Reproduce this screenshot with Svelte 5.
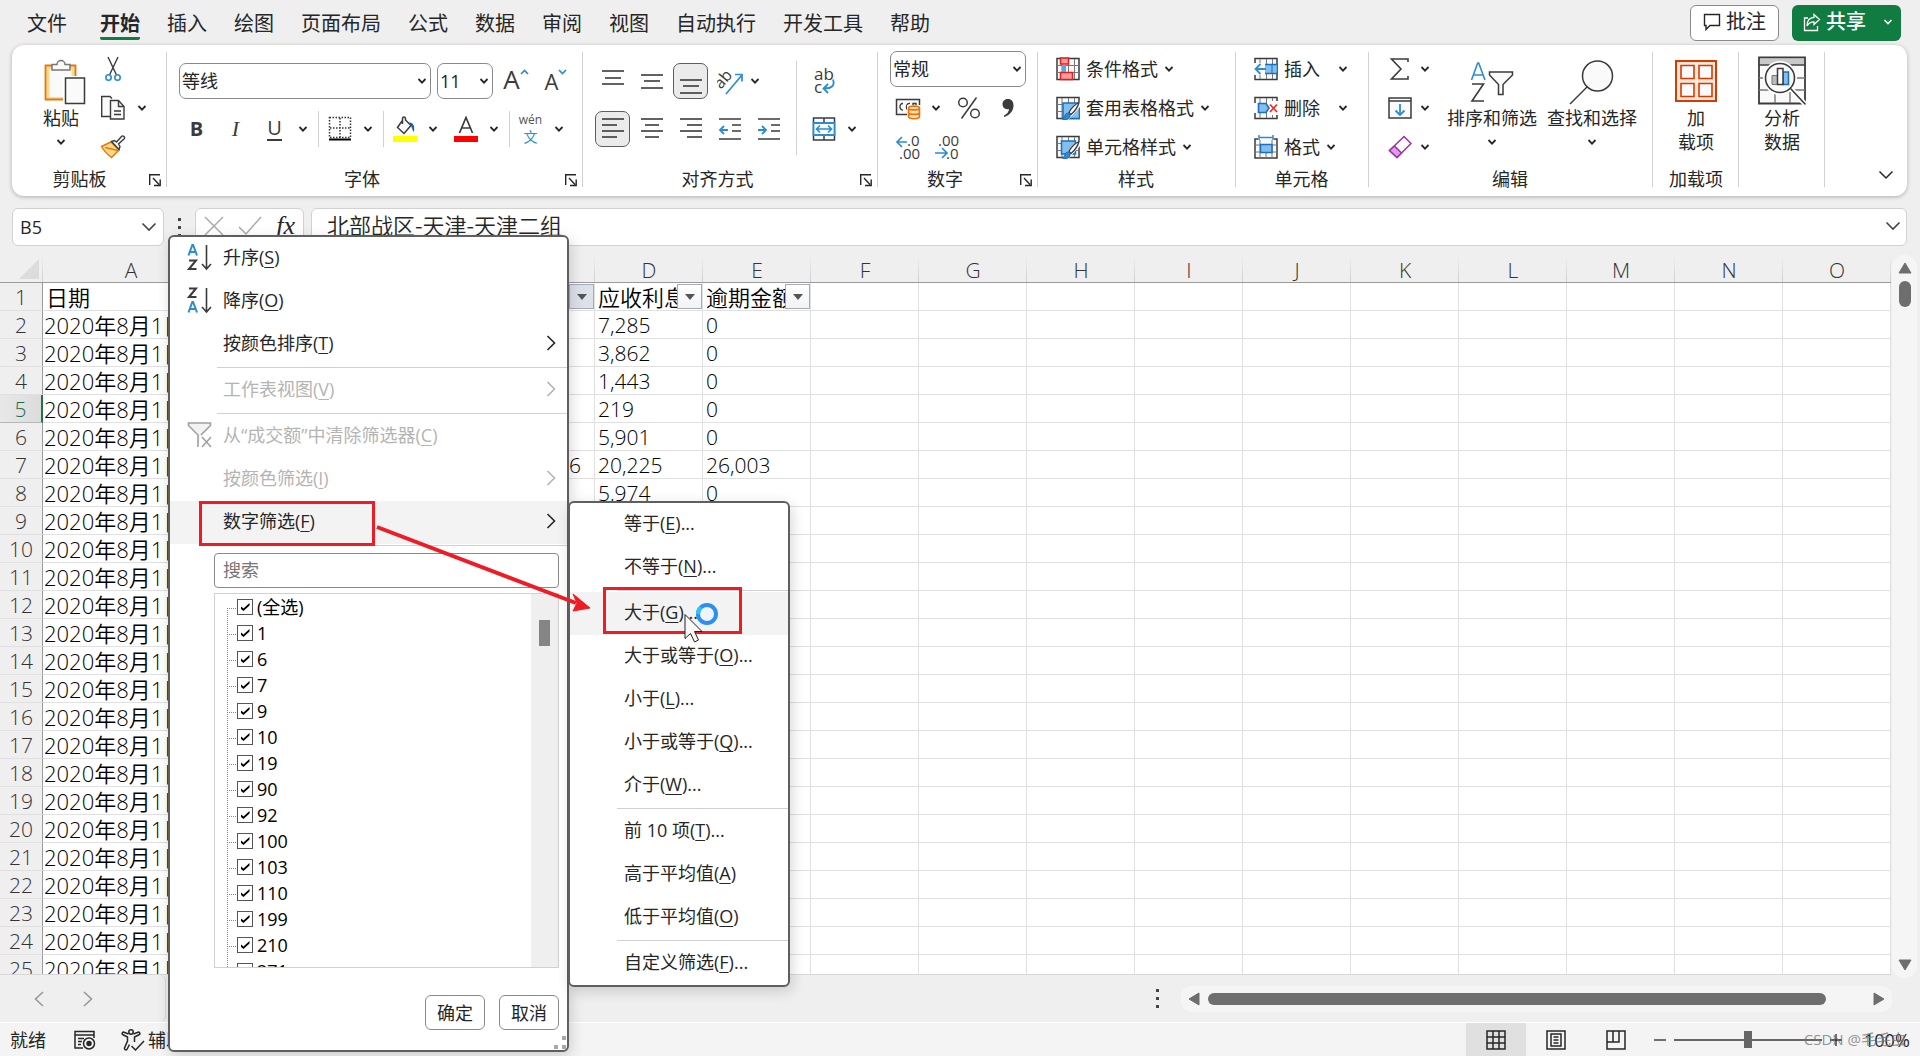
<script>
  const tabs = ['文件', '开始', '插入', '绘图', '页面布局', '公式', '数据', '审阅', '视图', '自动执行', '开发工具', '帮助'];
  const columns = ['A', 'B', 'C', 'D', 'E', 'F', 'G', 'H', 'I', 'J', 'K', 'L', 'M', 'N', 'O'];
  const emptyColumns = columns.slice(5);
  const figures = {
    2: ['', '7,285', '0'],
    3: ['', '3,862', '0'],
    4: ['', '1,443', '0'],
    5: ['', '219', '0'],
    6: ['', '5,901', '0'],
    7: ['6', '20,225', '26,003'],
    8: ['', '5,974', '0']
  };
  const rows = Array.from({ length: 24 }, (_, i) => i + 2);
  const values = ['(全选)', '1', '6', '7', '9', '10', '19', '90', '92', '100', '103', '110', '199', '210', '271'];
  const menuItems = [
    { text: '升序', key: 'S', icon: 'asc' },
    { text: '降序', key: 'O', icon: 'desc' },
    { text: '按颜色排序', key: 'T', more: true },
    null,
    { text: '工作表视图', key: 'V', more: true, disabled: true },
    null,
    { text: '从“成交额”中清除筛选器', key: 'C', icon: 'clear', disabled: true },
    { text: '按颜色筛选', key: 'I', more: true, disabled: true },
    { text: '数字筛选', key: 'F', more: true, active: true },
    null
  ];
  const filterItems = [
    { text: '等于', key: 'E', dots: true },
    { text: '不等于', key: 'N', dots: true },
    null,
    { text: '大于', key: 'G', dots: true, active: true },
    { text: '大于或等于', key: 'O', dots: true },
    { text: '小于', key: 'L', dots: true },
    { text: '小于或等于', key: 'Q', dots: true },
    { text: '介于', key: 'W', dots: true },
    null,
    { text: '前 10 项', key: 'T', dots: true },
    { text: '高于平均值', key: 'A' },
    { text: '低于平均值', key: 'O' },
    null,
    { text: '自定义筛选', key: 'F', dots: true }
  ];
</script>

{#snippet chev()}
  <svg class="chev" width="10" height="8" viewBox="0 0 10 8"><path d="M1.5 2 5 5.6 8.500 2" fill="none" stroke="#262626" stroke-width="1.8" /></svg>
{/snippet}

{#snippet drop(label, tight = false)}
  <button class="drop" class:tight aria-label={label}>{@render chev()}</button>
{/snippet}

{#snippet launcher(label)}
  <button class="launcher" aria-label={label}>
    <svg width="12" height="13" viewBox="0 0 12 13" fill="none" stroke="#262626" stroke-width="1.4"><path d="M.7 11V.7H11M4 4l6 6.500M11.200 5.500v6H5" /></svg>
  </button>
{/snippet}

{#snippet lines(list)}
  <svg width="24" height="26" viewBox="0 0 24 26" stroke="#3b3b3b" stroke-width="1.6">
    {#each list as [x1, x2, y]}<path d="M{x1} {y}H{x2}" />{/each}
  </svg>
{/snippet}

{#snippet gridBase()}
  <path d="M1 1.500h22v21H1z" fill="#fafafa" stroke="#3b3b3b" stroke-width="1.500" />
  <path d="M1 8.500h22M1 15.500h22M6 2v20M12.500 2v20M18.500 2v20" fill="none" stroke="#777" />
{/snippet}

<div class="app">
  <header class="tabs">
    <nav>
      {#each tabs as tab}
        <a href="#{tab}" class:current={tab === '开始'}>{tab}</a>
      {/each}
    </nav>
    <button class="comment">
      <svg width="18" height="20" viewBox="0 0 18 20" fill="none" stroke="#262626" stroke-width="1.400"><path d="M1.500 2.500h15v11H7l-4 4v-4H1.500z" /></svg>
      批注
    </button>
    <button class="share">
      <svg width="18" height="20" viewBox="0 0 18 20" fill="none" stroke="#fff" stroke-width="1.300"><path d="M5 6H1.500v12.500h13V14M11 2.500l5.500 5-5.500 5V9.800C7.500 9.800 5.500 11 4 14c0-5 2.500-8.300 7-8.600z" /></svg>
      共享
      <svg width="10" height="8" viewBox="0 0 10 8"><path d="M1.500 2 5 5.600 8.500 2" fill="none" stroke="#fff" stroke-width="1.600" /></svg>
    </button>
  </header>

  <section class="ribbon">
    <div class="group clipboard">
      <div class="body">
        <button class="big">
          <svg width="50" height="50" viewBox="0 0 50 50">
            <path d="M9.500 9.500h30v34h-30z" fill="#ffd98a" stroke="#e07a10" stroke-width="1.800" />
            <path d="M13.500 13h22v28h-22z" fill="#fafafa" />
            <path d="M16 14V8.500h5a4 4 0 0 1 8 0h5V14z" fill="#fafafa" stroke="#777" stroke-width="1.500" />
            <path d="M27 20h23v30H27z" fill="#fff" />
            <path d="M29.500 22h19v25.500h-19z" fill="#fafafa" stroke="#3b3b3b" stroke-width="1.500" />
          </svg>
          <span>粘贴</span>
          {@render chev()}
        </button>
        <div class="col">
          <div class="line">
            <button class="tool" aria-label="剪切">
              <svg width="24" height="26" viewBox="0 0 24 26" fill="none"><path d="M7 1l8.500 18M17 1 8.500 19" stroke="#3b3b3b" stroke-width="1.400" /><circle cx="7.500" cy="21.500" r="2.700" stroke="#2a8dd4" stroke-width="1.600" /><circle cx="16.500" cy="21.500" r="2.700" stroke="#2a8dd4" stroke-width="1.600" /></svg>
            </button>
          </div>
          <div class="line">
            <button class="tool" aria-label="复制">
              <svg width="26" height="26" viewBox="0 0 26 26" fill="#fafafa" stroke="#3b3b3b" stroke-width="1.400"><path d="M10 21.500H1.700v-20H10l2 2" /><path d="M10.500 5.500h8l5.500 6v12.500H10.500z" /><path d="M18.500 5.500v6H24M14 16h7M14 19.500h7" fill="none" /></svg>
            </button>
            {@render drop('复制选项')}
          </div>
          <div class="line">
            <button class="tool" aria-label="格式刷">
              <svg width="26" height="26" viewBox="0 0 26 26"><path d="M1.500 12.500 11 8l8 8-7.500 7.500C7 20 4 17 1.500 12.500z" fill="#ffd98a" stroke="#e07a10" stroke-width="1.500" /><path d="M5 13.500l13 3" stroke="#e07a10" stroke-width="1.300" /><path d="M11.500 7.500l3-1 2 1.500 5-5.500a1.700 1.700 0 0 1 2.500 2.500l-5.500 5 1.500 2.500-1 3z" fill="#fafafa" stroke="#3b3b3b" stroke-width="1.400" /></svg>
            </button>
          </div>
        </div>
      </div>
      <div class="name">剪贴板{@render launcher('剪贴板设置')}</div>
    </div>

    <div class="group font">
      <div class="body two">
        <div class="line fields">
          <label class="pick family"><select aria-label="字体"><option>等线</option></select>{@render chev()}</label>
          <label class="pick points"><select aria-label="字号"><option>11</option></select>{@render chev()}</label>
          <button class="sizer" aria-label="增大字号"><span class="glyph big-a">A</span><svg width="9" height="6" viewBox="0 0 9 6"><path d="M1 5l3.500-3.500L8 5" fill="none" stroke="#2a8dd4" stroke-width="1.700" /></svg></button>
          <button class="sizer" aria-label="减小字号"><span class="glyph small-a">A</span><svg width="9" height="6" viewBox="0 0 9 6"><path d="M1 1l3.500 3.500L8 1" fill="none" stroke="#2a8dd4" stroke-width="1.700" /></svg></button>
        </div>
        <div class="line">
          <button class="tool glyph"><b>B</b></button>
          <button class="tool glyph"><i>I</i></button>
          <button class="tool glyph"><span class="under">U</span></button>
          {@render drop('下划线')}
          <span class="rule"></span>
          <button class="tool" aria-label="边框">
            <svg width="24" height="26" viewBox="0 0 24 26" fill="none"><path d="M1.500 1.500h21v20h-21zM12 2v20M2 12h20" stroke="#333" stroke-width="1.500" stroke-dasharray="1.500 1.500" /><path d="M1 23.500h22" stroke="#000" stroke-width="2" /></svg>
          </button>
          {@render drop('边框选项')}
          <span class="rule"></span>
          <button class="tool" aria-label="填充颜色">
            <svg width="24" height="26" viewBox="0 0 24 26"><path d="M9 5l-4.500 6.500 6.500 6 7-8L12.500 4V2.500a1.500 1.500 0 0 0-3 0V8" fill="#fafafa" stroke="#3b3b3b" stroke-width="1.500" /><path d="M16 6.500c4-.5 6 3 5 9.500-2-1.500-1.500-5-5-9.500z" fill="#1565b0" /><path d="M0 20h24v6H0z" fill="#ff0" /></svg>
          </button>
          {@render drop('填充颜色选项')}
          <button class="tool color" aria-label="字体颜色">
            <svg width="24" height="26" viewBox="0 0 24 26"><path d="M5.500 17 12 1.500 18.500 17M7.500 12h9" fill="none" stroke="#3b3b3b" stroke-width="1.700" /><path d="M0 20h24v6H0z" fill="#f00" /></svg>
          </button>
          {@render drop('字体颜色选项')}
          <span class="rule"></span>
          <button class="tool pinyin"><span>wén</span><span>文</span></button>
          {@render drop('拼音选项')}
        </div>
      </div>
      <div class="name">字体{@render launcher('字体设置')}</div>
    </div>

    <div class="group align">
      <div class="body two split">
        <div class="left">
          <div class="line">
            <button class="tool" aria-label="顶端对齐">{@render lines([[1, 23, 3], [4, 20, 10], [1, 23, 16]])}</button>
            <button class="tool" aria-label="垂直居中">{@render lines([[1, 23, 7], [4, 20, 13], [1, 23, 20]])}</button>
            <button class="tool on" aria-label="底端对齐">{@render lines([[1, 23, 12], [4, 20, 18], [1, 23, 25]])}</button>
            <button class="tool" aria-label="方向">
              <svg width="26" height="28" viewBox="0 0 26 28"><text x="0" y="20" font-size="16" fill="#3b3b3b" transform="rotate(-50 5 17)">ab</text><path d="M9 27 25 8M18 7.500h7v7" fill="none" stroke="#2a8dd4" stroke-width="1.700" /></svg>
            </button>
            {@render drop('方向选项', true)}
          </div>
          <div class="line">
            <button class="tool on" aria-label="左对齐">{@render lines([[1, 23, 3], [1, 16, 9], [1, 23, 15], [1, 16, 21]])}</button>
            <button class="tool" aria-label="居中">{@render lines([[1, 23, 3], [5, 19, 9], [1, 23, 15], [5, 19, 21]])}</button>
            <button class="tool" aria-label="右对齐">{@render lines([[1, 23, 3], [8, 23, 9], [1, 23, 15], [8, 23, 21]])}</button>
            <button class="tool" aria-label="减少缩进">
              <svg width="24" height="26" viewBox="0 0 24 26" fill="none" stroke="#3b3b3b" stroke-width="1.600"><path d="M1 3h22M14 9h9M14 15h9M1 23h22" /><path d="M10 14H2M6 10l-4 4 4 4" stroke="#2a8dd4" stroke-width="1.800" /></svg>
            </button>
            <button class="tool" aria-label="增加缩进">
              <svg width="24" height="26" viewBox="0 0 24 26" fill="none" stroke="#3b3b3b" stroke-width="1.600"><path d="M1 3h22M14 9h9M14 15h9M1 23h22" /><path d="M1 14h8M5 10l4 4-4 4" stroke="#2a8dd4" stroke-width="1.800" /></svg>
            </button>
          </div>
        </div>
        <div class="right">
          <div class="line">
            <button class="tool" aria-label="自动换行">
              <svg width="24" height="28" viewBox="0 0 24 28"><text x="2" y="13" font-size="17" fill="#3b3b3b">ab</text><text x="2" y="26" font-size="17" fill="#3b3b3b">c</text><path d="M21 12.500c2 6-1 9-9 9M16 17l-4.500 4.500L16 26" fill="none" stroke="#2a8dd4" stroke-width="1.800" /></svg>
            </button>
          </div>
          <div class="line">
            <button class="tool" aria-label="合并后居中">
              <svg width="24" height="26" viewBox="0 0 24 26"><path d="M1.500 2h21v22h-21z" fill="#fafafa" stroke="#3b3b3b" stroke-width="1.500" /><path d="M12 2v5M12 19v5" stroke="#3b3b3b" stroke-width="1.500" /><path d="M1.500 7h21v12h-21z" fill="#fff" stroke="#2a8dd4" stroke-width="1.800" /><path d="M5 13h14M8 9.500 4.500 13 8 16.500M16 9.500l3.500 3.500-3.500 3.500" fill="none" stroke="#2a8dd4" stroke-width="1.700" /></svg>
            </button>
            {@render drop('合并选项')}
          </div>
        </div>
      </div>
      <div class="name">对齐方式{@render launcher('对齐设置')}</div>
    </div>

    <div class="group number">
      <div class="body">
        <div class="line fields"><label class="pick format"><select aria-label="数字格式"><option>常规</option></select>{@render chev()}</label></div>
        <div class="line">
          <button class="tool" aria-label="会计数字格式">
            <svg width="26" height="24" viewBox="0 0 26 24"><path d="M1.500 3.500h23v15h-23z" fill="#fafafa" stroke="#3b3b3b" stroke-width="1.500" /><path d="M8 7.500c-4-.5-4 7 0 6.500M15 7.500c-4.500-1-4.500 7-1 6.500M18 10V7.500h3V10" fill="none" stroke="#3b3b3b" stroke-width="1.400" /><path d="M12 9h14v15H12z" fill="#fff" /><path d="M13.500 12v8.500c0 3 11 3 11 0V12c0-2.500-11-2.500-11 0zM13.500 12c0 2.500 11 2.500 11 0M13.500 16.500c0 2.500 11 2.500 11 0" fill="#ffe0b0" stroke="#e8720c" stroke-width="1.600" /></svg>
          </button>
          {@render drop('会计格式选项')}
          <button class="tool percent" aria-label="百分比样式">
            <svg width="24" height="24" viewBox="0 0 24 24" fill="none" stroke="#3b3b3b" stroke-width="1.500"><circle cx="6" cy="6.500" r="4.300" /><circle cx="18" cy="17.500" r="4.300" /><path d="M19.500 1.500 4.500 22.500" /></svg>
          </button>
          <button class="tool" aria-label="千位分隔样式">
            <svg width="14" height="22" viewBox="0 0 14 22"><path d="M7 2c3.500 0 5.500 2.500 5.500 6.500C12.500 14 9 18 3 20v-1.500c3-1.500 5-4 5-6.500-4 1-6.500-1.500-6.500-5C1.500 4 4 2 7 2z" fill="#3b3b3b" /></svg>
          </button>
        </div>
        <div class="line">
          <button class="tool" aria-label="增加小数位数">
            <svg width="26" height="26" viewBox="0 0 26 26" font-size="15" fill="#3b3b3b"><text x="12" y="12">.0</text><text x="4" y="25">.00</text><path d="M12 8H2M7 3 2 8l5 5" fill="none" stroke="#2a8dd4" stroke-width="1.700" /></svg>
          </button>
          <button class="tool" aria-label="减少小数位数">
            <svg width="26" height="26" viewBox="0 0 26 26" font-size="15" fill="#3b3b3b"><text x="4" y="12">.00</text><text x="12" y="25">.0</text><path d="M1 19h12M8 14l5 5-5 5" fill="none" stroke="#2a8dd4" stroke-width="1.700" /></svg>
          </button>
        </div>
      </div>
      <div class="name">数字{@render launcher('数字设置')}</div>
    </div>

    <div class="group styles">
      <div class="body">
        <button class="wide">
          <svg width="24" height="24" viewBox="0 0 24 24">{@render gridBase()}<path d="M4.500 1h8v6h-8zM4.500 15.500h12v7h-12z" fill="#ff9a9a" stroke="#e02020" stroke-width="1.500" /><path d="M6 8h4v7H6z" fill="#55a8ea" /></svg>
          条件格式{@render chev()}
        </button>
        <button class="wide">
          <svg width="24" height="24" viewBox="0 0 24 24">{@render gridBase()}<path d="M7 7h16.500v15.500H7z" fill="#83beec" stroke="#1a6fc0" stroke-width="1.500" /><path d="M24 5 9 20l3 4L24 11z" fill="#fff" /><path d="M23 6.500c-4 2-8 6-10 10l2 2C19 15 22 11 23 6.500z" fill="#fafafa" stroke="#3b3b3b" stroke-width="1.300" /><path d="M14 18c-3-2-5 0-5 2s-2 2.500-4 2.500c4 2 10 1 9-4.500z" fill="#2a8dd4" stroke="#1a5fb0" /></svg>
          套用表格格式{@render chev()}
        </button>
        <button class="wide">
          <svg width="24" height="24" viewBox="0 0 24 24">{@render gridBase()}<path d="M5.500 6h14v13h-14z" fill="#83beec" stroke="#1a6fc0" stroke-width="1.500" /><path d="M24 5 9 20l3 4L24 11z" fill="#fff" /><path d="M23 6.500c-4 2-8 6-10 10l2 2C19 15 22 11 23 6.500z" fill="#fafafa" stroke="#3b3b3b" stroke-width="1.300" /><path d="M14 18c-3-2-5 0-5 2s-2 2.500-4 2.500c4 2 10 1 9-4.500z" fill="#2a8dd4" stroke="#1a5fb0" /></svg>
          单元格样式{@render chev()}
        </button>
      </div>
      <div class="name">样式</div>
    </div>

    <div class="group cells">
      <div class="body">
        <button class="wide spaced">
          <svg width="24" height="24" viewBox="0 0 24 24">{@render gridBase()}<path d="M10 7.500h13.500v9H10z" fill="#83beec" stroke="#1a6fc0" stroke-width="1.500" /><path d="M18 8v8" stroke="#1a6fc0" /><path d="M0 6h11v12H0z" fill="#fff" /><path d="M12 12H2M6.500 7 1.500 12l5 5" fill="none" stroke="#2a8dd4" stroke-width="1.800" /></svg>
          插入{@render chev()}
        </button>
        <button class="wide spaced">
          <svg width="24" height="24" viewBox="0 0 24 24">{@render gridBase()}<path d="M0 7h4v10H0zM13 5h11v14H13z" fill="#fff" /><path d="M4.500 7.500H12l3 4.500-3 4.500H4.500z" fill="#83beec" stroke="#1a6fc0" stroke-width="1.600" /><path d="M16 8.500l7 7.500M23 8.500 16 16" stroke="#e83030" stroke-width="1.800" /></svg>
          删除{@render chev()}
        </button>
        <button class="wide">
          <svg width="24" height="26" viewBox="0 0 24 26"><path d="M4 5H1v19h22V5h-3" fill="#fafafa" stroke="#3b3b3b" stroke-width="1.500" /><path d="M1 11h22M1 18h22M6 6v18M12 18v6M18 6v18" stroke="#777" /><path d="M6.500 10.500H18v8H6.500z" fill="#83beec" stroke="#1a6fc0" stroke-width="1.500" /><path d="M5 1v5M19 1v5M5 3.500h14" stroke="#2a8dd4" stroke-width="1.500" /></svg>
          格式{@render chev()}
        </button>
      </div>
      <div class="name">单元格</div>
    </div>

    <div class="group editing">
      <div class="body">
        <div class="col">
          <div class="line">
            <button class="tool" aria-label="自动求和"><svg width="22" height="24" viewBox="0 0 22 24"><path d="M19 5V2H2.500L12 12 2.500 22H19v-3" fill="none" stroke="#3b3b3b" stroke-width="1.600" /></svg></button>
            {@render drop('求和选项', true)}
          </div>
          <div class="line">
            <button class="tool" aria-label="填充"><svg width="24" height="24" viewBox="0 0 24 24" fill="#fafafa" stroke="#3b3b3b" stroke-width="1.500"><path d="M1 2h22v20H1zM1 5h22" /><path d="M12 8v11M7.500 14.500 12 19l4.500-4.500" fill="none" stroke="#2a8dd4" stroke-width="1.800" /></svg></button>
            {@render drop('填充选项', true)}
          </div>
          <div class="line">
            <button class="tool" aria-label="清除"><svg width="24" height="24" viewBox="0 0 24 24" stroke="#9b30a8" stroke-width="1.500"><path d="M1.500 15.500 16 1.500l7 7L9 22.500z" fill="#fafafa" /><path d="M1.500 15.500 6.500 11l7 7L9 22.500z" fill="#dc9be2" /></svg></button>
            {@render drop('清除选项', true)}
          </div>
        </div>
        <button class="big sort">
          <svg width="48" height="50" viewBox="0 0 48 50" fill="none"><path d="M3.500 24 9.700 7h1L17 24M5.500 19h9.500" stroke="#2a8dd4" stroke-width="1.600" /><path d="M4 28h11.500L4 45h12" stroke="#3b3b3b" stroke-width="1.600" /><path d="M21.500 16h23v3L35 28.500V38.500h-4.500V28.500L21.500 19z" fill="#fafafa" stroke="#3b3b3b" stroke-width="1.500" /></svg>
          <span>排序和筛选</span>
          {@render chev()}
        </button>
        <button class="big find">
          <svg width="48" height="50" viewBox="0 0 48 50" fill="#fafafa" stroke="#3b3b3b" stroke-width="1.500"><circle cx="29.500" cy="20" r="15" /><path d="M19 31 2 48" /></svg>
          <span>查找和选择</span>
          {@render chev()}
        </button>
      </div>
      <div class="name">编辑</div>
    </div>

    <div class="group single">
      <div class="body">
        <button class="big">
          <svg width="48" height="50" viewBox="0 0 48 50" fill="#fafafa" stroke="#d83b01"><path d="M4 5h40v40H4z" fill="#ffe9dc" stroke-width="2" /><path d="M9 9.500h13v13H9zM27 9.500h13v13H27zM9 27.500h13v13H9zM27 27.500h13v13H27z" stroke-width="1.600" /></svg>
          <span>加<br />载项</span>
        </button>
      </div>
      <div class="name">加载项</div>
    </div>

    <div class="group single">
      <div class="body">
        <button class="big">
          <svg width="48" height="50" viewBox="0 0 48 50"><path d="M1 1.500h46v46H1z" fill="#fafafa" stroke="#3b3b3b" stroke-width="1.800" /><path d="M2 2.500h44v6H2z" fill="#c8c8c8" /><path d="M1 9h46" stroke="#3b3b3b" stroke-width="1.500" /><path d="M1 22h46M1 34h46M17 34v13M32 34v13" stroke="#777" stroke-width="1.400" /><circle cx="22" cy="22" r="17" fill="#fff" /><circle cx="22" cy="22" r="14.500" fill="#fafafa" stroke="#3b3b3b" stroke-width="1.600" /><path d="M14 19.500h6v9h-6z" fill="#bbb" stroke="#777" /><path d="M25 16h5.500v12.500H25z" fill="#83beec" stroke="#1a6fc0" stroke-width="1.500" /><path d="M19.500 12.500h5.500v16h-5.500z" fill="#fff" stroke="#3b3b3b" stroke-width="1.500" /><path d="M33 33l14 15" stroke="#fff" stroke-width="5" /><path d="M32.500 32.500 47 48" stroke="#3b3b3b" stroke-width="1.600" /></svg>
          <span>分析<br />数据</span>
        </button>
      </div>
      <div class="name"></div>
    </div>

    <div class="tail">
      <button class="drop" aria-label="折叠功能区"><svg width="16" height="10" viewBox="0 0 16 10"><path d="M1.500 1.500 8 8l6.500-6.500" fill="none" stroke="#262626" stroke-width="1.500" /></svg></button>
    </div>
  </section>

  <section class="formula">
    <div class="box namebox">
      <input aria-label="名称框" value="B5" />
      <svg width="16" height="10" viewBox="0 0 16 10"><path d="M1.500 1.500 8 8l6.500-6.500" fill="none" stroke="#444" stroke-width="1.600" /></svg>
    </div>
    <span class="kebab"></span>
    <div class="box fx">
      <button aria-label="取消"><svg width="20" height="20" viewBox="0 0 20 20"><path d="M1 1l18 18M19 1 1 19" stroke="#aaa" stroke-width="1.500" /></svg></button>
      <button aria-label="输入"><svg width="24" height="20" viewBox="0 0 24 20"><path d="M1 11l7 7L23 1" fill="none" stroke="#aaa" stroke-width="1.500" /></svg></button>
      <button class="fn"><i>fx</i></button>
    </div>
    <div class="box entry">
      <input aria-label="编辑栏" value="北部战区-天津-天津二组" />
      <svg width="16" height="10" viewBox="0 0 16 10"><path d="M1.500 1.500 8 8l6.500-6.500" fill="none" stroke="#444" stroke-width="1.600" /></svg>
    </div>
  </section>

  <main class="sheet">
    <div class="grid">
      <table>
        <colgroup>
          <col class="c-head" /><col class="c-a" /><col class="c-b" />
          {#each columns.slice(2) as c}<col class="c-std" />{/each}
        </colgroup>
        <thead>
          <tr>
            <th class="corner"><svg width="20" height="20" viewBox="0 0 20 20"><path d="M20 0v20H0z" fill="#dcdcdc" /></svg></th>
            {#each columns as c}<th scope="col">{c}</th>{/each}
          </tr>
        </thead>
        <tbody>
          <tr>
            <th scope="row">1</th>
            <td>日期</td>
            <td></td>
            <td class="filter"><div class="head"><span></span><button class="pressed" aria-label="筛选"><i></i></button></div></td>
            <td class="filter"><div class="head"><span>应收利息</span><button aria-label="筛选"><i></i></button></div></td>
            <td class="filter"><div class="head"><span>逾期金额</span><button aria-label="筛选"><i></i></button></div></td>
            {#each emptyColumns as c}<td></td>{/each}
          </tr>
          {#each rows as r}
            <tr>
              <th scope="row" class:selected={r === 5}>{r}</th>
              <td class="date">2020年8月1日</td>
              <td></td>
              <td class="num end">{figures[r]?.[0] ?? ''}</td>
              <td class="num">{figures[r]?.[1] ?? ''}</td>
              <td class="num">{figures[r]?.[2] ?? ''}</td>
              {#each emptyColumns as c}<td></td>{/each}
            </tr>
          {/each}
        </tbody>
      </table>
    </div>
    <div class="vscroll">
      <svg width="14" height="12" viewBox="0 0 14 12"><path d="M7 1l6 10H1z" fill="#6e6e6e" stroke="#6e6e6e" stroke-linejoin="round" /></svg>
      <div class="thumb"></div>
      <svg class="down" width="14" height="12" viewBox="0 0 14 12"><path d="M7 11 1 1h12z" fill="#6e6e6e" stroke="#6e6e6e" stroke-linejoin="round" /></svg>
    </div>
  </main>

  <div class="sheetbar">
    <div class="arrows">
      <button aria-label="上一个工作表"><svg width="10" height="16" viewBox="0 0 10 16"><path d="M9 1 1.500 8 9 15" fill="none" stroke="#999" stroke-width="1.600" /></svg></button>
      <button aria-label="下一个工作表"><svg width="10" height="16" viewBox="0 0 10 16"><path d="M1 1l7.500 7L1 15" fill="none" stroke="#999" stroke-width="1.600" /></svg></button>
    </div>
    <span class="kebab"></span>
    <div class="hscroll">
      <svg width="12" height="14" viewBox="0 0 12 14"><path d="M1 7l10-6v12z" fill="#6e6e6e" stroke="#6e6e6e" stroke-linejoin="round" /></svg>
      <div class="lane"><div class="thumb"></div></div>
      <svg width="12" height="14" viewBox="0 0 12 14"><path d="M11 7 1 1v12z" fill="#6e6e6e" stroke="#6e6e6e" stroke-linejoin="round" /></svg>
    </div>
  </div>

  <footer class="status">
    <span class="ready">就绪</span>
    <button class="macro" aria-label="录制宏">
      <svg width="22" height="20" viewBox="0 0 22 20" fill="none" stroke="#262626" stroke-width="1.500"><path d="M9 18H1V1.500h19V8M1 5h19M4 8.500h6M4 11.500h4M4 14.500h3" /><circle cx="15" cy="13.500" r="5.500" /><circle cx="15" cy="13.500" r="2" fill="#262626" /></svg>
    </button>
    <button class="access">
      <svg width="24" height="22" viewBox="0 0 24 22" fill="none" stroke="#262626" stroke-width="1.500"><circle cx="10" cy="3" r="2.200" /><path d="M7.500 5 3 3.200c-2-.5-2.500 2-1 2.600L6.500 8v4L3.500 19c-.3 2 2 2.500 2.700 1l2.300-4.500M12.500 5 17 3.200c2-.5 2.500 2 1 2.600L13.500 8v5M10.500 17l4 4L23 12" /></svg>
      辅助功能: 调查
    </button>
    <span class="gap"></span>
    <button class="view current" aria-label="普通"><svg width="20" height="20" viewBox="0 0 20 20" fill="none" stroke="#262626" stroke-width="1.500"><path d="M1 1h18v18H1zM1 7h18M1 13h18M7 1v18M13 1v18" /></svg></button>
    <button class="view" aria-label="页面布局"><svg width="20" height="20" viewBox="0 0 20 20" fill="none" stroke="#262626" stroke-width="1.500"><path d="M1 1h18v18H1zM5 4h10v12H5zM7.500 7h5M7.500 10h5M7.500 13h5" /></svg></button>
    <button class="view" aria-label="分页预览"><svg width="20" height="20" viewBox="0 0 20 20" fill="none" stroke="#262626" stroke-width="1.500"><path d="M1 1h18v18H1zM1 12h12V1M7 1v11" /></svg></button>
    <button class="step" aria-label="缩小"><svg width="12" height="12" viewBox="0 0 12 12"><path d="M0 6h12" stroke="#262626" stroke-width="1.300" /></svg></button>
    <input class="zoom" type="range" min="0" max="100" value="50" aria-label="缩放" />
    <button class="step" aria-label="放大"><svg width="12" height="12" viewBox="0 0 12 12"><path d="M0 6h12M6 0v12" stroke="#262626" stroke-width="1.300" /></svg></button>
    <span class="percentage">100%</span>
    <span class="credit">CSDN @毛毛虫</span>
  </footer>

  <div class="popup menu" role="menu">
    {#each menuItems as item}
      {#if item}
        <button class="item" class:active={item.active} disabled={item.disabled} role="menuitem">
          <span class="icon">
            {#if item.icon === 'asc' || item.icon === 'desc'}
              <svg width="26" height="28" viewBox="0 0 26 28" fill="none" stroke-width="2">
                {#if item.icon === 'asc'}
                  <path d="M1.500 12.500 5.300 2h.8L10 12.500M3 9h5.500" stroke="#2a8dd4" />
                  <path d="M2 17.500h7L2 26h7.500" stroke="#3b3b3b" />
                {:else}
                  <path d="M2 2.500h7L2 11h7.500" stroke="#3b3b3b" />
                  <path d="M1.500 26.500 5.300 16h.8L10 26.500M3 23h5.500" stroke="#2a8dd4" />
                {/if}
                <path d="M19.500 2v24M15 21l4.500 5 4.500-5" stroke="#3b3b3b" stroke-width="1.600" />
              </svg>
            {:else if item.icon === 'clear'}
              <svg width="26" height="28" viewBox="0 0 26 28" fill="none" stroke="#a0a0a0" stroke-width="1.600"><path d="M11 26V14L1.500 4.500V2h22v2.500L14 14" fill="#f3f3f3" /><path d="M15 16l9 10M24 16l-9 10" /></svg>
            {/if}
          </span>
          <span class="text">{item.text}(<u>{item.key}</u>)</span>
          {#if item.more}<svg width="10" height="16" viewBox="0 0 10 16"><path d="M1.500 1 8.500 8l-7 7" fill="none" stroke="currentColor" stroke-width="1.600" /></svg>{/if}
        </button>
      {:else}
        <hr />
      {/if}
    {/each}
    <input class="search" type="text" placeholder="搜索" aria-label="搜索" />
    <div class="tree">
      <div class="nodes">
        {#each values as v}
          <label><input type="checkbox" checked />{v}</label>
        {/each}
      </div>
      <div class="gutter"><div class="thumb"></div></div>
    </div>
    <div class="actions">
      <button>确定</button>
      <button>取消</button>
    </div>
    <svg class="grip" width="14" height="14" viewBox="0 0 14 14"><path d="M9 0h4v4H9zM9 9h4v4H9zM1 9h4v4H1z" fill="#a8a8a8" /></svg>
  </div>

  <div class="popup submenu" role="menu">
    {#each filterItems as item}
      {#if item}
        <button class="item" class:active={item.active} role="menuitem">
          <span class="text">{item.text}(<u>{item.key}</u>){item.dots ? '...' : ''}</span>
        </button>
      {:else}
        <hr />
      {/if}
    {/each}
  </div>

  <div class="mark first"></div>
  <div class="mark second"></div>
  <svg class="pointer" width="240" height="110" viewBox="0 0 240 110">
    <path d="M7 7 206 83" stroke="#ee1c25" stroke-width="4" />
    <path d="M220 88 203 91 207 83 203 74z" fill="#ee1c25" stroke="#ee1c25" />
  </svg>
  <svg class="cursor" width="40" height="50" viewBox="0 0 40 50">
    <circle cx="23" cy="13" r="9" fill="#eef4fa" stroke="#2a8ff2" stroke-width="4" />
    <path d="M14 13a9 9 0 0 1 3-6.700" fill="none" stroke="#2cc4fa" stroke-width="4" />
    <path d="M1 13.500V37.500l5.500-5L10.500 41l4-2-4-8.500H18z" fill="#f8f8f8" stroke="#222" stroke-width="1" />
  </svg>
</div>

<style>
  :global(body) {
    margin: 0;
    overflow: hidden;
  }
  .app {
    position: relative;
    display: flex;
    flex-direction: column;
    height: 100vh;
    overflow: hidden;
    background: #efefef;
    color: #262626;
    font: 18px/24px "Open Sans", "Noto Sans CJK SC", sans-serif;
  }
  button, input, select {
    font: inherit;
    color: inherit;
    background: none;
    border: 0;
    padding: 0;
    margin: 0;
    box-sizing: border-box;
  }
  svg {
    display: block;
    flex: none;
  }

  /* tabs */
  .tabs {
    display: flex;
    align-items: center;
    height: 45px;
    padding: 0 19px 0 27px;
    flex: none;
    box-sizing: border-box;
  }
  .tabs nav {
    display: flex;
    gap: 27px;
    flex: 1;
    font-size: 20px;
  }
  .tabs a {
    color: inherit;
    text-decoration: none;
    line-height: 26px;
    padding-top: 6px;
    border-bottom: 3px solid transparent;
    white-space: nowrap;
  }
  .tabs a:first-child {
    margin-right: 6px;
  }
  .tabs a.current {
    font-weight: 700;
    border-color: #107c41;
    border-radius: 2px;
  }
  .comment, .share {
    display: flex;
    align-items: center;
    height: 36px;
    gap: 5px;
    padding: 0 12px 2px;
    border-radius: 6px;
    font-size: 20px;
  }
  .comment {
    background: #fff;
    border: 1px solid #8a8a8a;
    margin-right: 13px;
  }
  .share {
    background: #107c41;
    color: #fff;
    font-weight: 500;
    padding: 0 8px 2px 11px;
  }
  .share svg:last-child {
    margin-left: 12px;
  }

  /* ribbon */
  .ribbon {
    display: flex;
    height: 151px;
    margin: 0 13px 0 12px;
    flex: none;
    background: #fff;
    border-radius: 12px;
    box-shadow: 0 1px 4px rgba(0, 0, 0, 0.28);
  }
  .group {
    display: flex;
    flex-direction: column;
    flex: none;
    box-sizing: border-box;
    padding-top: 4px;
    background: linear-gradient(#d1d1d1, #d1d1d1) right 7px / 1px 135px no-repeat;
  }
  .body {
    height: 117px;
  }
  .two {
    box-sizing: border-box;
    padding-top: 8px;
  }
  .line {
    display: flex;
    align-items: center;
    height: 39px;
  }
  .two .line {
    height: 48px;
  }
  .name {
    position: relative;
    height: 26px;
    line-height: 26px;
    text-align: center;
  }
  .launcher {
    position: absolute;
    right: 6px;
    bottom: 5px;
  }
  .tool, .drop {
    display: flex;
    align-items: center;
    justify-content: center;
    flex: none;
  }
  .tool {
    width: 39px;
    height: 36px;
  }
  .tool.on {
    width: 35px;
    margin: 0 2px;
    background: #ebebeb;
    border: 1px solid #5e5e5e;
    border-radius: 7px;
  }
  .drop {
    width: 18px;
    height: 24px;
  }
  .drop.tight {
    width: 12px;
  }
  .rule {
    width: 1px;
    height: 36px;
    margin: 0 1px 0 6px;
    background: #d1d1d1;
  }
  .glyph {
    font-size: 20px;
    color: #3b3b3b;
  }
  .glyph i {
    font-family: "Liberation Serif", serif;
    font-size: 22px;
  }
  .under {
    line-height: 22px;
    border-bottom: 2px solid #3b3b3b;
  }
  .sizer {
    display: flex;
    justify-content: center;
    width: 34px;
    height: 36px;
  }
  .sizer svg {
    margin-top: 6px;
  }
  .big-a {
    font-size: 26px;
    line-height: 32px;
  }
  .small-a {
    font-size: 22px;
    line-height: 36px;
  }
  .color {
    margin-left: 4px;
  }
  .pinyin {
    flex-direction: column;
    font-size: 12px;
    line-height: 16px;
    color: #555;
  }
  .pinyin span + span {
    color: #2a8dd4;
    font-size: 14px;
    line-height: 18px;
  }
  .pick {
    position: relative;
    display: flex;
    align-items: center;
    height: 36px;
    box-sizing: border-box;
    border: 1px solid #8a8a8a;
    border-radius: 7px;
    background: #fff;
  }
  .pick select {
    appearance: none;
    flex: 1;
    height: 34px;
    padding-left: 2px;
  }
  .pick .chev {
    margin-right: 3px;
  }
  .family {
    width: 252px;
  }
  .points {
    width: 56px;
  }
  .points select {
    width: 36px;
  }
  .format {
    width: 136px;
  }
  .fields {
    gap: 6px;
    padding-left: 2px;
  }
  .big {
    display: flex;
    flex-direction: column;
    align-items: center;
    padding-top: 7px;
    line-height: 24px;
    white-space: nowrap;
  }
  .big .chev {
    margin-top: 8px;
  }
  .wide {
    display: flex;
    align-items: center;
    height: 39px;
    gap: 6px;
    white-space: nowrap;
  }
  .wide.spaced .chev {
    margin-left: 12px;
  }
  .clipboard {
    width: 155px;
  }
  .clipboard .body {
    display: flex;
    padding-left: 24px;
  }
  .clipboard .tool {
    width: 40px;
  }
  .clipboard .name {
    padding-right: 20px;
  }
  .clipboard .big {
    width: 50px;
    margin-right: 7px;
  }
  .font {
    width: 416px;
  }
  .font .body {
    padding-left: 10px;
  }
  .font .name, .align .name, .number .name {
    padding-right: 26px;
  }
  .align {
    width: 295px;
  }
  .split {
    display: flex;
    padding-left: 10px;
  }
  .split .left {
    width: 204px;
    background: linear-gradient(#d1d1d1, #d1d1d1) right 4px / 1px 94px no-repeat;
  }
  .split .right {
    padding-left: 7px;
  }
  .number {
    width: 160px;
  }
  .number .body {
    padding-left: 10px;
  }
  .percent {
    margin-left: 4px;
  }
  .styles {
    width: 198px;
  }
  .styles .body, .cells .body {
    padding-left: 18px;
  }
  .styles .name, .cells .name, .editing .name {
    padding-right: 2px;
  }
  .cells {
    width: 133px;
  }
  .editing {
    width: 284px;
  }
  .editing .body {
    display: flex;
    padding-left: 11px;
  }
  .sort {
    margin: 0 10px 0 16px;
  }
  .single {
    width: 86px;
  }
  .single .body {
    display: flex;
    justify-content: center;
  }
  .tail {
    display: flex;
    flex: 1;
    align-items: flex-end;
    justify-content: flex-end;
    padding: 0 12px 9px 0;
  }

  /* formula bar */
  .formula {
    display: flex;
    height: 38px;
    flex: none;
    margin: 12px 13px 0 12px;
  }
  .box {
    display: flex;
    align-items: center;
    box-sizing: border-box;
    background: #fff;
    border: 1px solid #d1d1d1;
    border-radius: 6px;
  }
  .box input {
    flex: 1;
    min-width: 0;
    outline: 0;
  }
  .namebox {
    width: 152px;
    padding: 0 6px 0 7px;
  }
  .kebab {
    width: 3px;
    height: 19px;
    align-self: center;
    background: repeating-linear-gradient(#444 0 3px, transparent 3px 8px);
  }
  .formula .kebab {
    margin: 0 14px;
  }
  .fx {
    width: 109px;
    padding: 0 8px 2px;
    justify-content: space-between;
  }
  .fn {
    font: 26px/30px "Liberation Serif", serif;
  }
  .entry {
    flex: 1;
    margin-left: 7px;
    padding: 0 5px 2px 15px;
    font-family: "Noto Sans CJK SC", sans-serif;
    font-size: 22px;
  }
  .entry input {
    height: 32px;
    padding-bottom: 4px;
    font-weight: 350;
  }

  /* sheet */
  .sheet {
    display: flex;
    flex: 1;
    min-height: 0;
    padding-top: 9px;
  }
  .grid {
    flex: 1;
    min-width: 0;
    overflow: hidden;
    border-bottom: 1px solid #d8d8d8;
  }
  table {
    table-layout: fixed;
    width: 1891px;
    border-collapse: separate;
    border-spacing: 0;
    color: #000;
    font: 350 22px/25px "Open Sans", "Noto Sans CJK SC", sans-serif;
  }
  .c-head { width: 43px; }
  .c-a { width: 176px; }
  .c-b { width: 268px; }
  .c-std { width: 108px; }
  th, td {
    box-sizing: border-box;
    height: 28px;
    padding: 2px 0 0 3px;
    text-align: left;
    white-space: nowrap;
    overflow: hidden;
    border-right: 1px solid #e0e0e0;
    border-bottom: 1px solid #e0e0e0;
  }
  td {
    background: #fff;
  }
  th {
    padding: 2px 0 0;
    text-align: center;
    font-weight: 300;
    font-size: 21px;
    color: #333;
  }
  thead th {
    height: 28px;
    padding-top: 3px;
    line-height: 24px;
    border-right: 0;
    border-bottom-color: #9b9b9b;
    background: linear-gradient(transparent, #cfcfcf) right top / 1px 100% no-repeat;
  }
  .corner svg {
    margin: 0 0 2px 19px;
  }
  tbody th {
    border-right-color: #9b9b9b;
  }
  th.selected {
    color: #1d6b42;
    background: linear-gradient(90deg, #e8e8e8, #dcdcdc);
    border-right: 2px solid #217346;
    border-bottom-color: #b8b8b8;
  }
  .date {
    padding-left: 1px;
  }
  .num {
    font-size: 21px;
  }
  .end {
    text-align: right;
    padding-right: 13px;
  }
  .filter {
    padding-top: 0;
  }
  .head {
    display: flex;
    height: 27px;
    line-height: 29px;
  }
  .head span {
    flex: 1;
    min-width: 0;
    overflow: hidden;
  }
  .head button {
    display: flex;
    align-items: center;
    justify-content: center;
    width: 25px;
    height: 25px;
    margin-top: 1px;
    flex: none;
    border: 1px solid #a5abb8;
    background: linear-gradient(#fff, #f0f2f6);
  }
  .head button.pressed {
    background: #dde1ea;
  }
  .head button i {
    border: 5px solid transparent;
    border-top: 6px solid #555;
    border-bottom: 0;
  }
  .vscroll {
    display: flex;
    flex-direction: column;
    align-items: center;
    width: 25px;
    box-sizing: border-box;
    flex: none;
    margin: 0 3px -3px 1px;
    padding: 7px 0;
    gap: 7px;
    border-radius: 12px;
    background: #f5f5f5;
  }
  .vscroll .thumb {
    width: 12px;
    height: 26px;
    border-radius: 6px;
    background: #6e6e6e;
  }
  .down {
    margin-top: auto;
  }

  /* sheet bar */
  .sheetbar {
    display: flex;
    height: 48px;
    flex: none;
    box-sizing: border-box;
    padding-right: 28px;
    border-bottom: 1px solid #fff;
  }
  .arrows {
    display: flex;
    align-items: center;
    gap: 39px;
    box-sizing: border-box;
    width: 166px;
    padding-left: 34px;
    border: 1px solid #d8d8d8;
    border-width: 0 1px 0 0;
    border-radius: 0 6px 6px 0;
  }
  .sheetbar .kebab {
    margin-left: auto;
    margin-right: 22px;
  }
  .hscroll {
    display: flex;
    align-items: center;
    width: 711px;
    height: 26px;
    gap: 8px;
    align-self: center;
    box-sizing: border-box;
    padding: 0 7px;
    border-radius: 10px;
    background: #f5f5f5;
  }
  .lane {
    flex: 1;
  }
  .lane .thumb {
    width: 94%;
    height: 12px;
    border-radius: 6px;
    background: #6e6e6e;
  }

  /* status bar */
  .status {
    position: relative;
    display: flex;
    align-items: center;
    height: 33px;
    flex: none;
    box-sizing: border-box;
    padding: 0 12px 0 10px;
    background: #f4f4f4;
  }
  .macro {
    margin: 0 25px 0 28px;
  }
  .access {
    display: flex;
    align-items: center;
    gap: 3px;
  }
  .gap {
    flex: 1;
  }
  .view {
    display: flex;
    align-items: center;
    justify-content: center;
    width: 60px;
    height: 33px;
  }
  .view.current {
    background: #e0e0e0;
  }
  .view:nth-of-type(5) {
    margin-right: 8px;
  }
  .zoom {
    appearance: none;
    width: 148px;
    height: 18px;
    margin: 0 8px;
  }
  .zoom::-webkit-slider-runnable-track {
    height: 2px;
    background: #666;
  }
  .zoom::-webkit-slider-thumb {
    appearance: none;
    width: 8px;
    height: 17px;
    margin-top: -8px;
    background: #666;
  }
  .percentage {
    margin-left: 22px;
    width: 44px;
  }
  .credit {
    position: absolute;
    right: 14px;
    top: 4px;
    font-size: 15px;
    color: rgba(120, 120, 120, 0.8);
  }

  /* popups */
  .popup {
    position: absolute;
    display: flex;
    flex-direction: column;
    box-sizing: border-box;
    background: #fff;
    border: 2px solid #5f5f5f;
    border-radius: 6px;
    box-shadow: 2px 4px 14px rgba(0, 0, 0, 0.16);
  }
  .menu {
    left: 168px;
    top: 235px;
    width: 401px;
  }
  .submenu {
    left: 568px;
    top: 501px;
    width: 222px;
  }
  .item {
    display: flex;
    align-items: center;
    height: 43px;
    flex: none;
    padding: 0 11px 3px 17px;
    text-align: left;
    white-space: nowrap;
  }
  .item:disabled {
    color: #b4b4b4;
  }
  .item.active {
    background: #f3f3f3;
  }
  .icon {
    width: 36px;
  }
  .item .text {
    flex: 1;
  }
  .submenu .item {
    padding-left: 54px;
  }
  u {
    text-underline-offset: 3px;
    text-decoration-thickness: 1px;
  }
  hr {
    width: auto;
    height: 1px;
    border: 0;
    margin: 1px 0 1px 47px;
    background: #d1d1d1;
    flex: none;
  }
  .search {
    height: 35px;
    margin: 6px 8px 0 44px;
    padding: 0 8px 2px;
    border: 1px solid #8a8a8a;
    border-radius: 4px;
  }
  .search::placeholder {
    color: #767676;
    opacity: 1;
  }
  .tree {
    display: flex;
    height: 375px;
    margin: 5px 8px 0 44px;
    box-sizing: border-box;
    border: 1px solid #d1d1d1;
    overflow: hidden;
    color: #000;
  }
  .nodes {
    flex: 1;
    padding-left: 12px;
    background: linear-gradient(#fff, #fff) 0 0 / 100% 14px no-repeat, repeating-linear-gradient(#888 0 1px, transparent 1px 2px) 12px 0 / 1px 100% no-repeat;
  }
  .nodes label {
    display: flex;
    align-items: center;
    height: 26px;
    gap: 4px;
    padding-left: 10px;
    background: repeating-linear-gradient(90deg, #888 0 1px, transparent 1px 2px) 0 14px / 10px 1px no-repeat;
  }
  .nodes input {
    appearance: none;
    display: flex;
    align-items: center;
    justify-content: center;
    width: 16px;
    height: 16px;
    border: 1px solid #555;
  }
  .nodes input:checked::before {
    content: "";
    width: 9px;
    height: 8px;
    background: #000;
    clip-path: polygon(0 38%, 0 68%, 33% 100%, 100% 30%, 100% 0, 33% 68%);
  }
  .gutter {
    width: 27px;
    box-sizing: border-box;
    padding: 26px 0 0 8px;
    background: #efefef;
  }
  .gutter .thumb {
    width: 11px;
    height: 26px;
    background: #858585;
  }
  .actions {
    display: flex;
    justify-content: flex-end;
    gap: 14px;
    padding: 27px 8px 20px;
  }
  .actions button {
    width: 60px;
    height: 35px;
    border: 1px solid #8a8a8a;
    border-radius: 6px;
  }
  .grip {
    position: absolute;
    right: 0;
    bottom: 0;
  }

  /* annotations */
  .mark {
    position: absolute;
    box-sizing: border-box;
    border: 3px solid #ee1c25;
  }
  .first {
    left: 199px;
    top: 501px;
    width: 176px;
    height: 45px;
  }
  .second {
    left: 603px;
    top: 587px;
    width: 139px;
    height: 47px;
  }
  .pointer {
    position: absolute;
    left: 370px;
    top: 520px;
  }
  .cursor {
    position: absolute;
    left: 684px;
    top: 601px;
  }
</style>
